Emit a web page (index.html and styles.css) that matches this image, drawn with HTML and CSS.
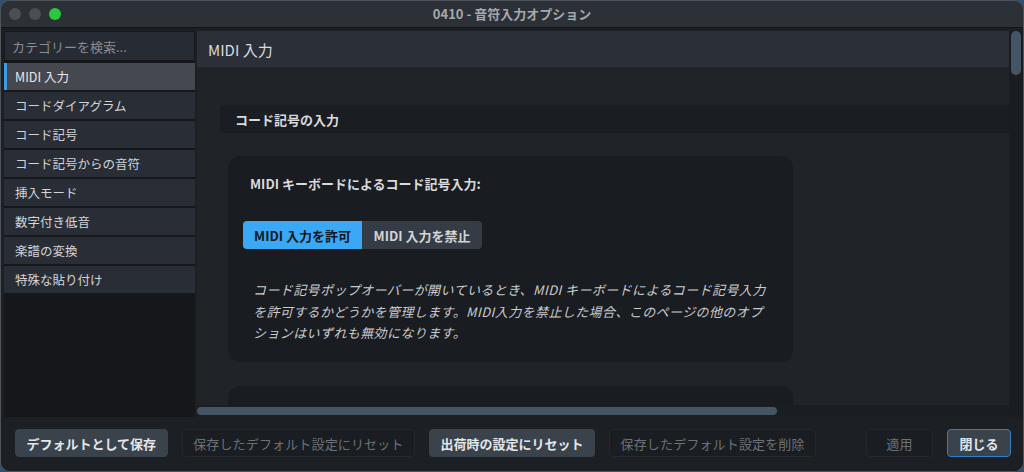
FILE: index.html
```html
<!DOCTYPE html>
<html lang="ja">
<head>
    <meta charset="UTF-8">
    <title>0410 - 音符入力オプション</title>
    <link rel="stylesheet" href="styles.css">
</head>
<body>
    <div class="window">
        <!-- TITLE BAR -->
        <div class="titlebar">
            <div class="lights">
                <span class="light"></span>
                <span class="light"></span>
                <span class="light light-green"></span>
            </div>
            <div class="title">0410 - 音符入力オプション</div>
            <div></div>
        </div>

        <div class="main">
            <!-- SIDEBAR -->
            <div class="sidebar">
                <div class="search">カテゴリーを検索...</div>
                <ul class="cat-list">
                    <li class="cat-item active">MIDI 入力</li>
                    <li class="cat-item">コードダイアグラム</li>
                    <li class="cat-item">コード記号</li>
                    <li class="cat-item">コード記号からの音符</li>
                    <li class="cat-item">挿入モード</li>
                    <li class="cat-item">数字付き低音</li>
                    <li class="cat-item">楽譜の変換</li>
                    <li class="cat-item">特殊な貼り付け</li>
                </ul>
            </div>

            <!-- CONTENT -->
            <div class="content">
                <div class="pane">
                    <div class="page-header">MIDI 入力</div>
                    <div class="page-body">
                        <div class="section-title">コード記号の入力</div>
                        <div class="card">
                            <div class="option-label">MIDI キーボードによるコード記号入力:</div>
                            <div class="segmented">
                                <button class="seg-btn on">MIDI 入力を許可</button>
                                <button class="seg-btn">MIDI 入力を禁止</button>
                            </div>
                            <p class="option-desc">コード記号ポップオーバーが開いているとき、MIDI キーボードによるコード記号入力<br>を許可するかどうかを管理します。MIDI入力を禁止した場合、このページの他のオプ<br>ションはいずれも無効になります。</p>
                        </div>
                        <div class="card card-next"></div>
                    </div>
                    <div class="hscroll"><div class="hthumb"></div></div>
                </div>
                <div class="vscroll"><div class="vthumb"></div></div>
            </div>
        </div>

        <!-- FOOTER -->
        <div class="footer">
            <button class="btn">デフォルトとして保存</button>
            <button class="btn" disabled>保存したデフォルト設定にリセット</button>
            <button class="btn">出荷時の設定にリセット</button>
            <button class="btn" disabled>保存したデフォルト設定を削除</button>
            <span class="spacer"></span>
            <button class="btn btn-apply" disabled>適用</button>
            <button class="btn btn-close">閉じる</button>
        </div>
    </div>
</body>
</html>
```

FILE: styles.css
```css
* {
    box-sizing: border-box;
}

body {
    margin: 0;
    background: #34506b;
    font-family: "Noto Sans CJK JP", "Noto Sans", sans-serif;
    color: #d6d8db;
}

.window {
    width: 1024px;
    height: 472px;
    display: flex;
    flex-direction: column;
    background: #1c1f23;
    border: 1px solid #50555c;
    border-radius: 10px;
    overflow: hidden;
}

/* Title bar */
.titlebar {
    height: 27px;
    flex: none;
    display: grid;
    grid-template-columns: 1fr auto 1fr;
    align-items: center;
    background: #2c3037;
    border-bottom: 1px solid #131518;
}

.lights {
    display: flex;
    gap: 8px;
    padding-left: 8px;
}

.light {
    width: 12px;
    height: 12px;
    border-radius: 50%;
    background: #4b4e53;
}

.light-green {
    background: #2cc63f;
}

.title {
    font-size: 13px;
    font-weight: bold;
    color: #a5a8ad;
    line-height: 16px;
}

/* Main */
.main {
    flex: 1;
    display: flex;
    gap: 2px;
    padding: 3px 0 0 3px;
    min-height: 0;
}

.sidebar {
    width: 191px;
    flex: none;
    display: flex;
    flex-direction: column;
    gap: 2px;
    background: #15171a;
}

.search {
    height: 30px;
    padding: 0 7px;
    display: flex;
    align-items: center;
    font-size: 13px;
    color: #878b92;
    background: #272c34;
    border: 1px solid #15171a;
}

.cat-list {
    list-style: none;
    margin: 0;
    padding: 0;
    display: flex;
    flex-direction: column;
    gap: 2px;
}

.cat-item {
    height: 27px;
    padding-left: 11px;
    display: flex;
    align-items: center;
    font-size: 12.5px;
    color: #d2d4d7;
    background: #292e36;
}

.cat-item.active {
    background: #45494f;
    color: #e6e7e9;
    box-shadow: inset 3px 0 0 #3a9ee8;
}

.content {
    flex: 1;
    display: flex;
    min-width: 0;
}

.pane {
    flex: 1;
    display: flex;
    flex-direction: column;
    min-width: 0;
}

.page-header {
    height: 36px;
    flex: none;
    padding-left: 11px;
    display: flex;
    align-items: center;
    font-size: 15px;
    color: #d8dadd;
    background: #2b3038;
}

.page-body {
    flex: 1;
    overflow: hidden;
    padding: 38px 0 0 23px;
    background: #202429;
}

.section-title {
    height: 28px;
    padding-left: 15px;
    display: flex;
    align-items: center;
    font-size: 13px;
    font-weight: bold;
    color: #d8dadd;
    background: #1a1d21;
    border-radius: 4px 0 0 4px;
}

.card {
    width: 565px;
    margin: 23px 0 0 8px;
    padding: 19px 15px 18px;
    background: #191c20;
    border-radius: 12px;
}

.card-next {
    height: 60px;
    margin-top: 24px;
}

.option-label {
    margin-left: 7px;
    font-size: 13px;
    font-weight: 600;
    line-height: 18px;
    color: #d8dadd;
}

.segmented {
    display: flex;
    margin-top: 28px;
}

.seg-btn {
    height: 28px;
    width: 119px;
    border: none;
    padding: 0;
    font-family: inherit;
    font-size: 13px;
    font-weight: 600;
    color: #d2d5d8;
    background: #363c45;
}

.seg-btn:first-child {
    border-radius: 4px 0 0 4px;
}

.seg-btn:last-child {
    width: 120px;
    border-radius: 0 4px 4px 0;
}

.seg-btn.on {
    background: #3aa8f5;
    color: #0f1720;
}

.option-desc {
    margin: 30px 0 0 10px;
    font-size: 13px;
    font-style: italic;
    letter-spacing: 0.4px;
    line-height: 21.5px;
    color: #c9cbce;
    white-space: nowrap;
}

.hscroll {
    height: 12px;
    flex: none;
    padding: 2px 0;
    background: #1a1d21;
}

.hthumb {
    width: 580px;
    height: 8px;
    border-radius: 4px;
    background: #465563;
}

.vscroll {
    width: 14px;
    flex: none;
    padding: 0 2px;
    background: #191c20;
}

.vthumb {
    height: 44px;
    border-radius: 5px;
    background: #465563;
}

/* Footer */
.footer {
    height: 54px;
    flex: none;
    display: flex;
    align-items: center;
    gap: 14px;
    padding: 0 12px 2px 14px;
    background: #1c1f23;
}

.spacer {
    flex: 1;
}

.btn {
    height: 28px;
    padding: 0 10.5px;
    border: 1px solid #3a424c;
    border-radius: 4px;
    font-family: inherit;
    font-size: 13px;
    font-weight: 600;
    color: #e4e6e8;
    background: #3a424c;
}

.btn:disabled {
    font-weight: normal;
    letter-spacing: 0.15px;
    color: #6c7177;
    background: #1a1d21;
    border-color: #24282d;
}

.btn-apply {
    width: 67px;
}

.btn-close {
    width: 64px;
    border: 1.5px solid #2f7fc2;
}
```
